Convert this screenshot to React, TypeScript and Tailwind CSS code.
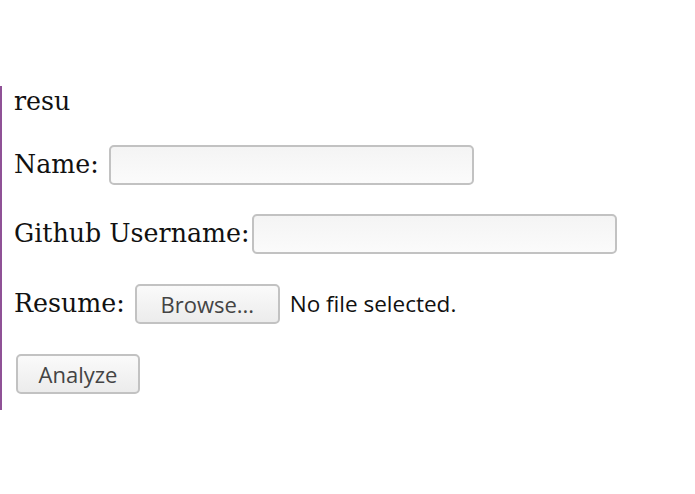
import { useRef, useState } from 'react'

const serif = { fontFamily: '"DejaVu Serif", serif' }
const sans = { fontFamily: '"Open Sans", "DejaVu Sans", sans-serif' }

function TextField() {
  return (
    <input
      type="text"
      className="h-[40px] w-[365px] rounded-[5px] border-2 border-[#c2c2c2] bg-gradient-to-b from-[#f4f4f4] to-[#fbfbfb] px-2 text-[20px] outline-none"
    />
  )
}

export default function App() {
  const fileRef = useRef<HTMLInputElement>(null)
  const [fileName, setFileName] = useState<string | null>(null)

  return (
    <div className="h-[494px] w-[695px] bg-white pt-[86px]">
      <div
        className="h-[324px] border-l-2 border-[#8f5196] pl-[12px] text-[25.3px] text-[#111]"
        style={serif}
      >
        <div className="leading-[32px]">resu</div>

        <div className="mt-[27px] flex h-[40px] items-center">
          <span className="mr-[10px]">Name:</span>
          <TextField />
        </div>

        <div className="mt-[29px] flex h-[40px] items-center">
          <span className="mr-[2px]">Github Username:</span>
          <TextField />
        </div>

        <div className="mt-[30px] flex h-[40px] items-center">
          <span className="mr-[10px]">Resume:</span>
          <button
            type="button"
            onClick={() => fileRef.current?.click()}
            className="h-[40px] w-[145px] rounded-[5px] border-2 border-[#c2c2c2] bg-gradient-to-b from-[#fafafa] to-[#ececec] text-[22px] text-[#444]"
            style={sans}
          >
            Browse...
          </button>
          <span className="ml-[10px] text-[22.5px] text-[#111]" style={sans}>
            {fileName ?? 'No file selected.'}
          </span>
          <input
            ref={fileRef}
            type="file"
            className="hidden"
            onChange={(e) => setFileName(e.target.files?.[0]?.name ?? null)}
          />
        </div>

        <div className="mt-[30px]">
          <button
            type="button"
            className="ml-[2px] h-[40px] w-[124px] rounded-[5px] border-2 border-[#c2c2c2] bg-gradient-to-b from-[#fafafa] to-[#ececec] text-[22px] text-[#444]"
            style={sans}
          >
            Analyze
          </button>
        </div>
      </div>
    </div>
  )
}
